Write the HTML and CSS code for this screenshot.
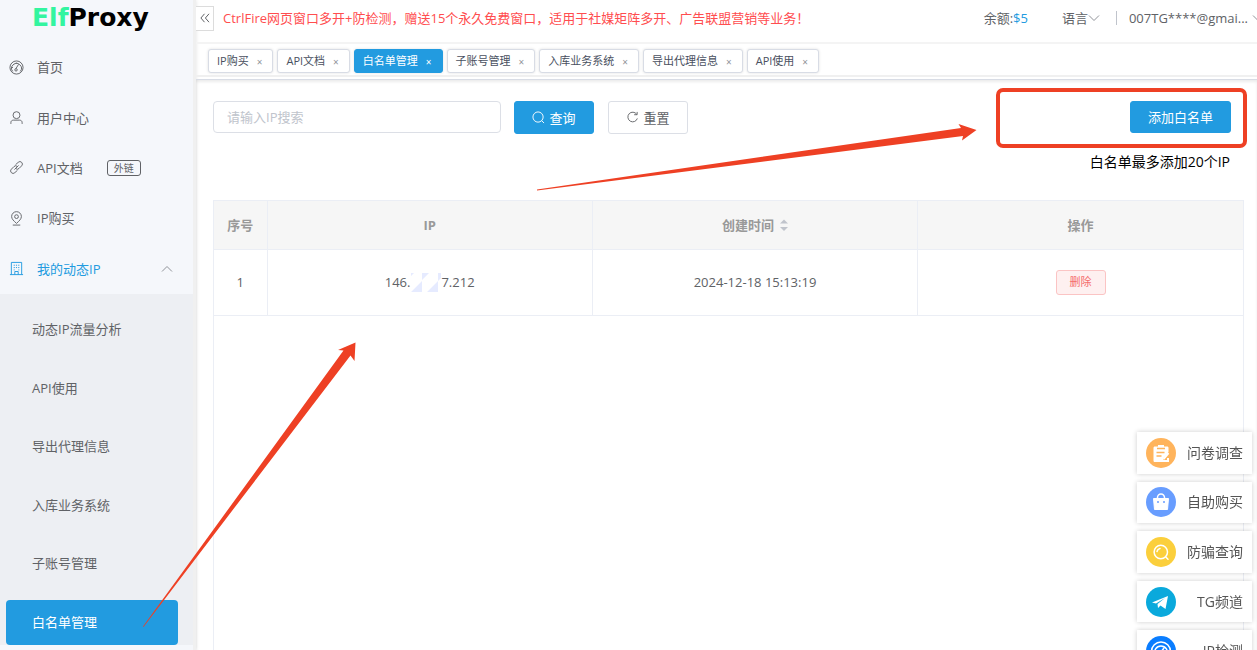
FILE: index.html
```html
<!DOCTYPE html>
<html lang="zh-CN">
<head>
<meta charset="utf-8">
<meta name="viewport" content="width=device-width, initial-scale=1">
<title>ElfProxy 白名单管理</title>
<link rel="stylesheet" href="styles.css">
</head>
<body>
<div class="app">
  <aside class="sidebar">
    <a class="logo" href="#"><span class="logo-accent">Elf</span>Proxy</a>
    <nav class="menu">
      <a class="menu-item" href="#">
        <svg class="menu-icon" viewBox="0 0 16 16"><circle cx="8" cy="8" r="7"/><path d="M4 12.200A5.200 5.200 0 1 1 12 12.200M7.300 9.300 10.200 4.600M3 8h1.200M4.800 4.500l.7.7M8 3v1"/><circle cx="7.500" cy="10.500" r="1.300"/></svg>
        <span>首页</span>
      </a>
      <a class="menu-item" href="#">
        <svg class="menu-icon" viewBox="0 0 16 16"><circle cx="8" cy="5.500" r="3.700"/><path d="M2 14.800v-1.300c0-1.800 1.200-2.700 3-2.700h6c1.800 0 3 .9 3 2.700v1.300"/></svg>
        <span>用户中心</span>
      </a>
      <a class="menu-item" href="#">
        <svg class="menu-icon" viewBox="0 0 16 16"><path d="M7 5 9.800 2.500a2.600 2.600 0 0 1 3.700 3.700L10.700 9a2.600 2.600 0 0 1-3.700 0M9 11l-2.800 2.500a2.600 2.600 0 0 1-3.700-3.700L5.300 7A2.600 2.600 0 0 1 9 7M5.800 10.200l4.400-4.400"/></svg>
        <span>API文档</span>
        <span class="tag">外链</span>
      </a>
      <a class="menu-item" href="#">
        <svg class="menu-icon" viewBox="0 0 16 16"><path d="M8 13.200C5 10.500 2.800 8.500 2.800 5.900a5.200 5.200 0 0 1 10.400 0C13.200 8.500 11 10.500 8 13.200zM4 15h8"/><circle cx="8" cy="6" r="2"/></svg>
        <span>IP购买</span>
      </a>
      <a class="menu-item menu-item-open" href="#">
        <svg class="menu-icon" viewBox="0 0 16 16"><path d="M1 14.500h14M2.500 14.500v-13h11v13M6.200 14.500v-3.300h3.600v3.300M5 4.500h1.200M7.400 4.500h1.200M9.800 4.500H11M5 7h1.200M7.400 7h1.200M9.800 7H11M5 9.500h1M10 9.500h1"/></svg>
        <span>我的动态IP</span>
        <svg class="menu-arrow" viewBox="0 0 12 12"><path d="M1 8.500 6 3.500l5 5"/></svg>
      </a>
    </nav>
    <nav class="submenu">
      <a class="submenu-item" href="#">动态IP流量分析</a>
      <a class="submenu-item" href="#">API使用</a>
      <a class="submenu-item" href="#">导出代理信息</a>
      <a class="submenu-item" href="#">入库业务系统</a>
      <a class="submenu-item" href="#">子账号管理</a>
      <a class="submenu-item submenu-active" href="#">白名单管理</a>
    </nav>
  </aside>

  <div class="main">
    <header class="topbar">
      <button class="collapse" type="button" aria-label="收起菜单"><svg viewBox="0 0 10 10"><path d="M4.500.8.9 5l3.600 4.200M9 .8 5.400 5 9 9.200"/></svg></button>
      <p class="notice">CtrlFire网页窗口多开+防检测，赠送15个永久免费窗口，适用于社媒矩阵多开、广告联盟营销等业务！</p>
      <div class="account">
        <span>余额:<b class="balance">$5</b></span>
        <button class="dropdown language" type="button">语言<svg viewBox="0 0 12 12"><path d="m1 3.500 5 5 5-5"/></svg></button>
        <button class="dropdown user" type="button">007TG****@gmai...<svg viewBox="0 0 12 12"><path d="m1 3.500 5 5 5-5"/></svg></button>
      </div>
    </header>

    <nav class="tabs">
      <button class="tab" type="button">IP购买<span class="close">×</span></button>
      <button class="tab" type="button">API文档<span class="close">×</span></button>
      <button class="tab tab-active" type="button">白名单管理<span class="close">×</span></button>
      <button class="tab" type="button">子账号管理<span class="close">×</span></button>
      <button class="tab" type="button">入库业务系统<span class="close">×</span></button>
      <button class="tab" type="button">导出代理信息<span class="close">×</span></button>
      <button class="tab" type="button">API使用<span class="close">×</span></button>
    </nav>

    <main class="content">
      <form class="toolbar">
        <input class="search" type="text" placeholder="请输入IP搜索" aria-label="请输入IP搜索">
        <button class="btn btn-primary" type="button"><svg viewBox="0 0 14 14"><circle cx="6.500" cy="6.500" r="5.500"/><path d="m10.500 10.500 2.500 2.500"/></svg>查询</button>
        <button class="btn" type="button"><svg viewBox="0 0 14 14"><path d="M11.500 3.500A5.200 5.200 0 1 0 12.200 8M12 1v3H8.800"/></svg>重置</button>
        <button class="btn btn-primary btn-add" type="button">添加白名单</button>
      </form>
      <p class="hint">白名单最多添加20个IP</p>
      <div class="table-wrap">
        <table class="table">
          <thead>
            <tr>
              <th class="col-index">序号</th>
              <th>IP</th>
              <th><span class="sortable">创建时间<svg viewBox="0 0 8 12"><path d="M0 4.500 4 .5l4 4zM0 8l4 4 4-4z"/></svg></span></th>
              <th>操作</th>
            </tr>
          </thead>
          <tbody>
            <tr>
              <td>1</td>
              <td><span class="ip">146.<svg viewBox="0 0 31 19"><path d="M1 0h3L1 3zM12 0h7l-7 7zM28 0h3v5l-3 3zM1 19 12 8v11zM17 19 28 8v11z" fill="#e6ebff"/></svg>7.212</span></td>
              <td>2024-12-18 15:13:19</td>
              <td><button class="delete" type="button">删除</button></td>
            </tr>
          </tbody>
        </table>
      </div>
    </main>
  </div>
</div>

<aside class="float-links">
  <a class="float-link" href="#"><svg viewBox="0 0 30 30"><circle cx="15" cy="15" r="15" fill="#ffb45c"/><path d="M9 8.500h3V7h6v1.500h3c1 0 1.500.5 1.500 1.500v4l-5 6v4H9c-1 0-1.500-.5-1.500-1.500V10c0-1 .5-1.500 1.500-1.500z" fill="#fff"/><path d="M11 10.500h8M10.500 14.500h8M10.500 18h5" stroke="#ffb45c" stroke-width="1.500"/><path d="m17.500 21 5-6M17 23h5v-3" stroke="#fff" stroke-width="2" fill="none"/></svg><span>问卷调查</span></a>
  <a class="float-link" href="#"><svg viewBox="0 0 30 30"><circle cx="15" cy="15" r="15" fill="#689dff"/><path d="M7.500 11.500h15l-1 11h-13z" fill="#fff" stroke="#fff" stroke-linejoin="round"/><path d="M11.500 11.500v-1a3.500 3.500 0 0 1 7 0v1" stroke="#fff" stroke-width="1.500" fill="none"/><circle cx="12" cy="15" r="1" fill="#689dff"/><circle cx="18" cy="15" r="1" fill="#689dff"/></svg><span>自助购买</span></a>
  <a class="float-link" href="#"><svg viewBox="0 0 30 30"><circle cx="15" cy="15" r="15" fill="#fbcf3c"/><g fill="none" stroke="#fff" stroke-width="1.500" stroke-linecap="round"><circle cx="14.800" cy="15" r="6.700"/><path d="m19.800 20 2.200 2.200M11 14.500a4 4 0 0 1 3-3"/></g></svg><span>防骗查询</span></a>
  <a class="float-link" href="#"><svg viewBox="0 0 30 30"><circle cx="15" cy="15" r="15" fill="#0aa9dc"/><path d="M6 15.500 22 9l-2.500 13-5-3.500-2.500 2.500-.5-4 7.500-6-9 5.500z" fill="#fff"/></svg><span>TG频道</span></a>
  <a class="float-link" href="#"><svg viewBox="0 0 30 30"><circle cx="15" cy="15" r="15" fill="#0a7dff"/><g fill="none" stroke="#fff" stroke-width="1.500"><circle cx="15" cy="15.500" r="9.500"/><path d="M9 19a6.500 6.500 0 1 1 12 0M15 16l3-4"/></g><circle cx="14.500" cy="16.500" r="1.800" fill="#fff"/></svg><span>IP检测</span></a>
</aside>

<svg class="annotations" viewBox="0 0 1257 650" fill="#ee4024" aria-hidden="true">
  <rect x="998" y="90" width="247" height="56" rx="5" fill="none" stroke="#ee4024" stroke-width="4"/>
  <path d="M537 189.500 961 128 958.500 124 976.500 130 962 140.500 963 136 537 190.500z"/>
  <path d="M143 626.500 343.500 350.500 338 350 355.500 342.500 354.500 361 350.500 355.500 143.500 627z"/>
</svg>
</body>
</html>
```
FILE: styles.css
```css
* { box-sizing: border-box; }

body {
  margin: 0;
  height: 100vh;
  overflow: hidden;
  background: #fff;
  color: #606266;
  font: 13px/20px "Open Sans", "Noto Sans CJK SC", sans-serif;
}

button, input { font: inherit; color: inherit; }
button { cursor: pointer; }
a { color: inherit; text-decoration: none; }
p { margin: 0; }
svg { flex: none; }

.app { display: flex; height: 100%; }

/* Sidebar */
.sidebar {
  flex: none;
  width: 196px;
  background: #f5f7fb;
  border-right: 3px solid #f0f0f0;
  box-shadow: 0 0 4px rgba(0, 0, 0, .12);
}
.logo {
  display: block;
  height: 42px;
  padding-left: 32px;
  color: #000;
  font: 700 25px/36px "DejaVu Sans", sans-serif;
}
.logo-accent { color: #33f5a0; }

.menu { display: grid; grid-auto-rows: 1fr; height: 252px; }
.menu-item {
  display: flex;
  align-items: center;
  padding: 0 20px 0 9px;
}
.menu-icon {
  width: 15px;
  height: 15px;
  margin-right: 13px;
  fill: none;
  stroke: currentColor;
  stroke-width: 1;
}
.menu-item-open { color: #229be0; }
.menu-arrow {
  width: 12px;
  height: 12px;
  margin-left: auto;
  fill: none;
  stroke: #909399;
}
.tag {
  margin-left: 24px;
  padding: 0 6px;
  border: 1px solid #606266;
  border-radius: 3px;
  font-size: 10px;
  line-height: 14px;
}
.submenu {
  display: flex;
  flex-direction: column;
  justify-content: space-between;
  height: 351px;
  padding: 13px 15px 0 6px;
  background: #edeff3;
}
.submenu-item {
  padding-left: 26px;
  border-radius: 4px;
  line-height: 45px;
}
.submenu-active { background: #229be0; color: #fff; }

/* Header */
.main { display: flex; flex: 1; flex-direction: column; min-width: 0; }
.topbar {
  display: flex;
  align-items: center;
  height: 44px;
  padding-bottom: 6px;
  border-bottom: 2px solid #f4f4f4;
  white-space: nowrap;
}
.collapse {
  display: grid;
  place-items: center;
  width: 18px;
  height: 25px;
  padding: 0;
  border: 1px solid #dcdcdc;
  border-left: 0;
  background: #fff;
}
.collapse svg { width: 10px; height: 10px; fill: none; stroke: #606266; }
.notice { margin-left: 9px; color: #ff4d4f; }
.account { display: flex; margin-left: auto; }
.balance { color: #229be0; font-weight: 500; }
.dropdown {
  display: flex;
  align-items: center;
  padding: 0;
  border: 0;
  background: none;
}
.dropdown svg { width: 12px; height: 12px; fill: none; stroke: #909399; }
.language { margin-left: 34px; padding-right: 16px; }
.user { margin-right: -7px; position: relative; gap: 4px; padding-left: 13px; }
.user::before {
  content: "";
  position: absolute;
  left: 0;
  top: 3px;
  width: 1px;
  height: 14px;
  background: #c0c4cc;
}

.tabs {
  display: flex;
  gap: 4px;
  height: 33px;
  padding: 5px 12px 3px;
  border-bottom: 2px solid #f0f0f0;
}
.tab {
  display: flex;
  align-items: center;
  height: 24px;
  padding: 0 10px 0 8px;
  border: 1px solid #d8dce5;
  border-radius: 3px;
  background: #fff;
  box-shadow: 0 0 3px rgba(0, 0, 0, .12);
  color: #495060;
  font-size: 11px;
  line-height: 20px;
  white-space: nowrap;
}
.close { margin: 2px 0 0 8px; color: #909399; font-size: 10px; }
.tab-active { border-color: #229be0; background: #229be0; color: #fff; }
.tab-active .close { color: #fff; }

/* Content */
.content {
  display: flex;
  flex: 1;
  flex-direction: column;
  min-height: 0;
  margin-top: 2px;
  padding: 21px 13px 0 17px;
  border-top: 1px solid #d8dce5;
  box-shadow: inset 0 2px 3px rgba(0, 0, 0, .08);
}
.toolbar { display: flex; align-items: flex-start; }
.search {
  width: 288px;
  height: 32px;
  padding: 0 13px;
  border: 1px solid #dcdfe6;
  border-radius: 4px;
}
.search::placeholder { color: #c0c4cc; }
.btn {
  display: flex;
  align-items: center;
  justify-content: center;
  gap: 4px;
  width: 80px;
  height: 33px;
  margin-left: 14px;
  padding: 0;
  border: 1px solid #dcdfe6;
  border-radius: 3px;
  background: #fff;
}
.btn svg { width: 13px; height: 13px; fill: none; stroke: currentColor; }
.btn-primary { margin-left: 13px; border-color: #229be0; background: #229be0; color: #fff; }
.btn-add { width: 101px; height: 32px; margin: 0 13px 0 auto; }
.hint {
  padding: 18px 14px 28px 0;
  color: #000;
  font-size: 14px;
  text-align: right;
}

.table-wrap { flex: 1; border: 1px solid #ebeef5; border-bottom: 0; }
.table { width: 100%; border-collapse: collapse; table-layout: fixed; text-align: center; }
.col-index { width: 53px; }
.table th, .table td {
  padding: 0;
  border-bottom: 1px solid #ebeef5;
  border-right: 1px solid #ebeef5;
}
.table th:last-child, .table td:last-child { border-right: 0; }
.table th { height: 48px; background: #f6f6f6; color: #999; font-weight: 700; }
.table td { height: 66px; }
.sortable, .ip { display: inline-flex; align-items: center; }
.sortable svg { width: 8px; height: 12px; margin-left: 6px; fill: #c0c4cc; }
.ip svg { width: 31px; height: 19px; }
.delete {
  width: 50px;
  height: 25px;
  padding: 0;
  border: 1px solid #fbc4c4;
  border-radius: 3px;
  background: #fef0f0;
  color: #f56c6c;
  font-size: 11px;
  line-height: 20px;
}

/* Shortcuts fixed over the page */
.float-links {
  position: fixed;
  top: 432px;
  right: 5px;
  display: grid;
  grid-auto-rows: 1fr;
  gap: 8px;
  width: 115px;
  height: 240px;
}
.float-link {
  display: flex;
  align-items: center;
  justify-content: space-between;
  padding: 0 9px;
  background: #fff;
  box-shadow: 0 0 5px rgba(0, 0, 0, .2);
  color: #555;
  font-size: 14px;
}
.float-link svg { width: 30px; height: 30px; }

.annotations {
  position: absolute;
  inset: 0;
  width: 1257px;
  height: 650px;
  pointer-events: none;
}
```
